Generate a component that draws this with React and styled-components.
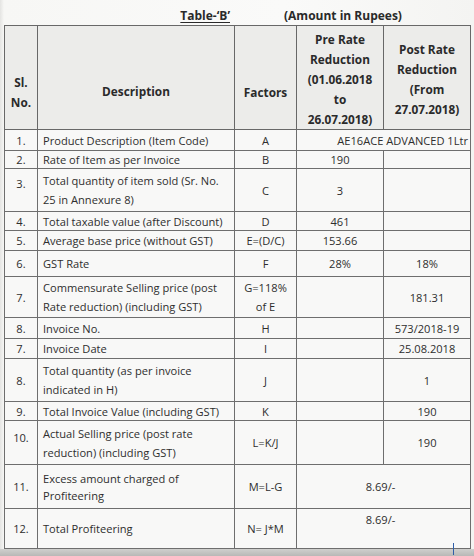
import React from 'react';
import styled, { createGlobalStyle } from 'styled-components';

const Global = createGlobalStyle`
  html, body { margin: 0; padding: 0; }
  body {
    width: 474px;
    height: 556px;
    overflow: hidden;
    background: #fbfbfa;
    font-family: "Open Sans", "Noto Sans", "DejaVu Sans", sans-serif;
    color: #2e2e2e;
  }
`;

const Page = styled.div`
  width: 474px;
  height: 556px;
  display: flex;
  flex-direction: column;
  position: relative;
  background: linear-gradient(90deg, #e4e4e2 0px, #f7f7f5 4px, #fafaf9 60%, #f4f4f2 100%);
`;

const TitleBar = styled.div`
  height: 25px;
  flex: none;
  box-sizing: border-box;
  padding-top: 6px;
  display: flex;
  align-items: center;
  font-weight: 700;
  font-size: 12px;
  color: #2a2a2a;
`;

const TableTitle = styled.span`
  width: 230px;
  text-align: right;
  text-decoration: underline;
  text-underline-offset: 2px;
`;

const AmountNote = styled.span`
  margin-left: 54px;
`;

const Table = styled.table`
  flex: none;
  margin-left: 4px;
  width: 466px;
  border-collapse: collapse;
  table-layout: fixed;
  border: 1px solid #686868;
`;

const Tr = styled.tr`
  height: ${p => p.$h}px;
`;

const Th = styled.th`
  border: 1px solid #686868;
  padding: ${p => (p.$top ? `${p.$top}px 2px 0` : '2px 2px 0')};
  vertical-align: ${p => (p.$top ? 'top' : 'middle')};
  background: #ececea;
  font-weight: 700;
  font-size: 11.8px;
  line-height: 20px;
  color: #2a2a2a;
  text-align: center;
`;

const Td = styled.td`
  border: 1px solid #6e6e6e;
  padding: ${p => p.$pad || '0 3px'};
  vertical-align: ${p => p.$valign || 'middle'};
  text-align: ${p => p.$align || 'center'};
  font-size: 11.1px;
  line-height: 15px;
  white-space: nowrap;
  overflow: visible;
  position: relative;
  background: #f8f8f7;
`;

const Line = styled.div`
  line-height: ${p => p.$lh || 19}px;
`;

const PenMark = styled.span`
  position: absolute;
  right: 16px;
  bottom: -7px;
  width: 1.5px;
  height: 12px;
  background: #2f5fa8;
`;

const BottomShade = styled.div`
  flex: 1;
  background: linear-gradient(180deg, #d0d0ce 0%, #b8b8b6 100%);
`;

const rows = [
  { no: '1.', desc: 'Product Description (Item Code)', f: 'A', merged: 'AE16ACE ADVANCED 1Ltr', mAlign: 'right', h: 21 },
  { no: '2.', desc: 'Rate of Item as per Invoice', f: 'B', pre: '190', h: 18 },
  { no: '3.', desc: ['Total quantity of item sold (Sr. No.', '25 in Annexure 8)'], f: 'C', pre: '3', h: 43, noPad: '0 0 14px' },
  { no: '4.', desc: 'Total taxable value (after Discount)', f: 'D', pre: '461', h: 19 },
  { no: '5.', desc: 'Average base price (without GST)', f: 'E=(D/C)', pre: '153.66', h: 20 },
  { no: '6.', desc: 'GST Rate', f: 'F', pre: '28%', post: '18%', h: 26 },
  { no: '7.', desc: ['Commensurate Selling price (post', 'Rate reduction) (including GST)'], f: ['G=118%', 'of E'], post: '181.31', h: 41 },
  { no: '8.', desc: 'Invoice No.', f: 'H', post: '573/2018-19', h: 21 },
  { no: '7.', desc: 'Invoice Date', f: 'I', post: '25.08.2018', h: 20 },
  { no: '8.', desc: ['Total quantity (as per invoice', 'indicated in H)'], f: 'J', post: '1', h: 43 },
  { no: '9.', desc: 'Total Invoice Value (including GST)', f: 'K', post: '190', h: 19 },
  { no: '10.', desc: ['Actual Selling price (post rate', 'reduction) (including GST)'], f: 'L=K/J', post: '190', h: 44, noPad: '0 0 10px' },
  { no: '11.', desc: ['Excess amount charged of', 'Profiteering'], f: 'M=L-G', merged: '8.69/-', h: 44, lh: 17 },
  { no: '12.', desc: 'Total Profiteering', f: 'N= J*M', merged: '8.69/-', mTop: true, h: 40, pen: true },
];

const lines = (v, lh) => (Array.isArray(v) ? v.map((t, i) => <Line key={i} $lh={lh}>{t}</Line>) : v);

export default function App() {
  return (
    <>
      <Global />
      <Page>
        <TitleBar>
          <TableTitle>Table-‘B’</TableTitle>
          <AmountNote>(Amount in Rupees)</AmountNote>
        </TitleBar>
        <Table>
          <colgroup>
            <col style={{ width: 33 }} />
            <col style={{ width: 197 }} />
            <col style={{ width: 62 }} />
            <col style={{ width: 87 }} />
            <col style={{ width: 87 }} />
          </colgroup>
          <thead>
            <Tr $h={104}>
              <Th $top={46}>Sl.<br />No.</Th>
              <Th $top={55}>Description</Th>
              <Th $top={56}>Factors</Th>
              <Th>Pre Rate<br />Reduction<br />(01.06.2018<br />to<br />26.07.2018)</Th>
              <Th>Post Rate<br />Reduction<br />(From<br />27.07.2018)</Th>
            </Tr>
          </thead>
          <tbody>
            {rows.map((r, i) => (
              <Tr key={i} $h={r.h}>
                <Td $pad={r.noPad}>{r.no}</Td>
                <Td $align="left" $pad="0 3px 0 5px">{lines(r.desc, r.lh)}</Td>
                <Td>{lines(r.f)}</Td>
                {r.merged ? (
                  <Td
                    colSpan={2}
                    $align={r.mAlign || 'center'}
                    $valign={r.mTop ? 'top' : 'middle'}
                    $pad={r.mAlign ? '0 2px 0 0' : r.mTop ? '3px 6px 0 0' : '0 6px 0 0'}
                  >
                    {r.merged}
                    {r.pen && <PenMark />}
                  </Td>
                ) : (
                  <>
                    <Td>{r.pre}</Td>
                    <Td>{r.post}</Td>
                  </>
                )}
              </Tr>
            ))}
          </tbody>
        </Table>
        <BottomShade />
      </Page>
    </>
  );
}
